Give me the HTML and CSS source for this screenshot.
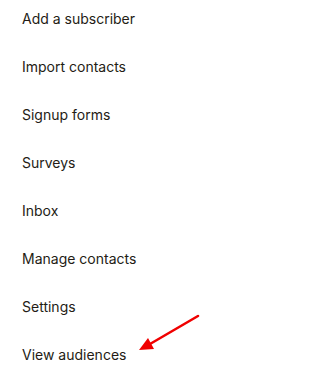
FILE: index.html
```html
<!DOCTYPE html>
<html>
<head>
<meta charset="utf-8">
<link rel="stylesheet" href="styles.css">
</head>
<body>
<ul class="menu">
  <li class="item">Add a subscriber</li>
  <li class="item">Import contacts</li>
  <li class="item">Signup forms</li>
  <li class="item">Surveys</li>
  <li class="item">Inbox</li>
  <li class="item">Manage contacts</li>
  <li class="item">Settings</li>
  <li class="item item-target">View audiences
    <svg class="arrow" width="70" height="45" viewBox="0 0 70 45">
      <line x1="60" y1="2" x2="12" y2="30" stroke="#f00000" stroke-width="2.6" stroke-linecap="round"/>
      <polygon points="1,36 10,24 16,35" fill="#f00000"/>
    </svg>
  </li>
</ul>
</body>
</html>
```
FILE: styles.css
```css
html, body {
  margin: 0;
  padding: 0;
  background: #ffffff;
}
.menu {
  list-style: none;
  margin: 0;
  padding: 0 0 0 22px;
  font-family: Inter, "Noto Sans", sans-serif;
  font-size: 14px;
  color: #241c15;
}
.item {
  height: 48px;
  line-height: 48px;
  position: relative;
}
.menu .item:first-child {
  margin-top: -5px;
}
.arrow {
  position: absolute;
  left: 116px;
  top: -17px;
}
```
